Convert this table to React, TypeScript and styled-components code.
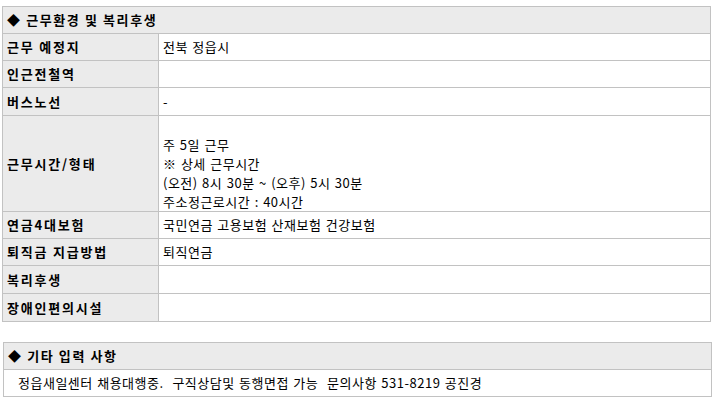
import * as React from "react";
import styled, { createGlobalStyle } from "styled-components";

const GlobalStyle = createGlobalStyle`
  html, body {
    margin: 0;
    padding: 0;
    background: #ffffff;
  }
  body {
    font-family: "Noto Sans CJK KR", "Liberation Sans", sans-serif;
    font-size: 13px;
    letter-spacing: 0.5px;
    word-spacing: 1px;
    color: #000000;
  }
`;

interface InfoRow {
  label: string;
  value: string[];
  height: number;
}

const workRows: InfoRow[] = [
  { label: "근무 예정지", value: ["전북 정읍시"], height: 26 },
  { label: "인근전철역", value: [], height: 26 },
  { label: "버스노선", value: ["-"], height: 27 },
  {
    label: "근무시간/형태",
    value: ["", "주 5일 근무", "※ 상세 근무시간", "(오전) 8시 30분 ~ (오후) 5시 30분", "주소정근로시간 : 40시간"],
    height: 95,
  },
  { label: "연금4대보험", value: ["국민연금 고용보험 산재보험 건강보험"], height: 26 },
  { label: "퇴직금 지급방법", value: ["퇴직연금"], height: 26 },
  { label: "복리후생", value: [], height: 27 },
  { label: "장애인편의시설", value: [], height: 27 },
];

const Page = styled.div`
  padding: 6px 0 0 2px;
  display: flex;
  flex-direction: column;
  gap: 20px;
`;

const Table = styled.table<{ $offset?: number }>`
  width: 709px;
  margin-left: ${p => p.$offset || 0}px;
  border-collapse: collapse;
  table-layout: fixed;
  border: 1px solid #c2c2c2;
`;

const LabelCol = styled.col`
  width: 156px;
`;

const HeadCell = styled.th`
  height: 26px;
  padding: 0 4px;
  background: #ebebeb;
  border-bottom: 1px solid #c2c2c2;
  text-align: left;
  font-weight: bold;
  font-size: 13px;
  letter-spacing: 1.6px;
  word-spacing: 0;
  line-height: 18px;
  color: #000000;
`;

const LabelCell = styled.th`
  padding: 0 4px;
  background: #ebebeb;
  border-right: 1px solid #c2c2c2;
  border-bottom: 1px solid #c2c2c2;
  text-align: left;
  vertical-align: middle;
  font-weight: bold;
  font-size: 13px;
  letter-spacing: 1.8px;
  word-spacing: 0;
  line-height: 18px;
  color: #000000;
  white-space: nowrap;
`;

const ValueCell = styled.td<{ $height: number; $multi?: boolean }>`
  height: ${p => p.$height}px;
  padding: 0 4px;
  border-bottom: 1px solid #c2c2c2;
  vertical-align: middle;
  line-height: ${p => (p.$multi ? "19px" : "18px")};
`;

const Line = styled.div`
  min-height: 18px;
  white-space: pre;
`;

const NoteCell = styled.td`
  height: 26px;
  padding: 0 4px 0 14px;
  line-height: 18px;
  white-space: pre;
`;

const SectionTitle = ({ title }: { title: string }) => (
  <thead>
    <tr>
      <HeadCell colSpan={2}>◆ {title}</HeadCell>
    </tr>
  </thead>
);

const App = () => {
  return (
    <>
      <GlobalStyle />
      <Page>
        <Table>
          <colgroup>
            <LabelCol />
            <col />
          </colgroup>
          <SectionTitle title="근무환경 및 복리후생" />
          <tbody>
            {workRows.map(row => (
              <tr key={row.label}>
                <LabelCell>{row.label}</LabelCell>
                <ValueCell $height={row.height} $multi={row.value.length > 1}>
                  {row.value.map((line, i) => (
                    <Line key={i}>{line}</Line>
                  ))}
                </ValueCell>
              </tr>
            ))}
          </tbody>
        </Table>

        <Table $offset={1}>
          <colgroup>
            <LabelCol />
            <col />
          </colgroup>
          <SectionTitle title="기타 입력 사항" />
          <tbody>
            <tr>
              <NoteCell colSpan={2}>정읍새일센터 채용대행중.  구직상담및 동행면접 가능  문의사항 531-8219 공진경</NoteCell>
            </tr>
          </tbody>
        </Table>
      </Page>
    </>
  );
};

export default App;
